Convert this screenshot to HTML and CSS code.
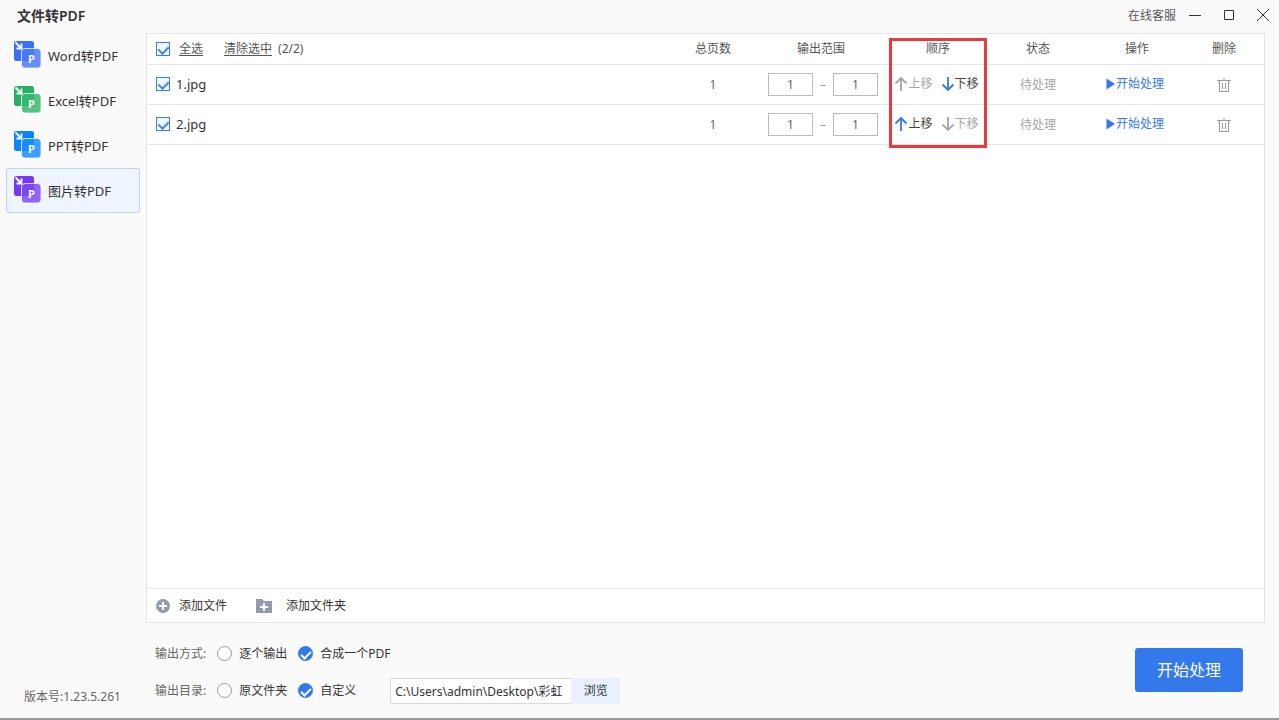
FILE: index.html
```
<!DOCTYPE html>
<html lang="zh-CN">
<head>
  <meta charset="UTF-8" />
  <meta name="viewport" content="width=device-width, initial-scale=1.0"/>
  <title>文件转PDF</title>
  <link rel="stylesheet" href="styles.css">
</head>
<body>
  <!-- shared icons -->
  <svg class="sprite" aria-hidden="true">
    <symbol id="convert" viewBox="0 0 28 28">
      <rect x="0" y="0" width="20" height="20" rx="2.5" fill="currentColor"/>
      <path d="M1.500 1.500l5.500 5.500M7.500 2.500v5h-5" fill="none" stroke="#fff" stroke-width="1.800"/>
      <rect x="7.500" y="7.500" width="19.500" height="19.500" rx="3.500" fill="currentColor"/>
      <rect x="7.500" y="7.500" width="19.500" height="19.500" rx="3.500" fill="#fff" fill-opacity=".22"/>
      <path d="M8 20V11a3 3 0 0 1 3-3h9v12z" fill="currentColor" fill-opacity=".7"/>
      <rect x="7.500" y="7.500" width="19.500" height="19.500" rx="3.500" fill="none" stroke="#fff" stroke-opacity=".75"/>
      <text class="icon-letter" x="17.500" y="22" text-anchor="middle">P</text>
    </symbol>
    <symbol id="up" viewBox="0 0 14 16">
      <path d="M7 15V2M1.500 7.500L7 2l5.500 5.500" fill="none" stroke="currentColor" stroke-width="1.800"/>
    </symbol>
    <symbol id="down" viewBox="0 0 14 16">
      <path d="M7 1v13M1.500 8.500L7 14l5.500-5.500" fill="none" stroke="currentColor" stroke-width="1.800"/>
    </symbol>
    <symbol id="play" viewBox="0 0 9 12">
      <path d="M0.500 0.500L9 6l-8.500 5.500z" fill="currentColor"/>
    </symbol>
    <symbol id="trash" viewBox="0 0 14 16">
      <path d="M0 3.500h14M7 1v2M2.500 3.500v11h9v-11M5.500 6v6M8.500 6v6" fill="none" stroke="currentColor"/>
    </symbol>
  </svg>

  <div class="window">
    <header class="titlebar">
      <h1>文件转PDF</h1>
      <div class="window-controls">
        <a href="#" class="support">在线客服</a>
        <button type="button" aria-label="最小化"><svg width="14" height="14" viewBox="0 0 14 14"><path d="M1 6.500h12"/></svg></button>
        <button type="button" aria-label="最大化"><svg width="14" height="14" viewBox="0 0 14 14"><path d="M2.500 1.500h9v9h-9z"/></svg></button>
        <button type="button" aria-label="关闭"><svg width="14" height="14" viewBox="0 0 14 14"><path d="M1 0l12 12M13 0L1 12"/></svg></button>
      </div>
    </header>

    <aside class="sidebar">
      <nav>
        <a href="#" class="nav-item"><svg class="word"><use href="#convert"/></svg>Word转PDF</a>
        <a href="#" class="nav-item"><svg class="excel"><use href="#convert"/></svg>Excel转PDF</a>
        <a href="#" class="nav-item"><svg class="ppt"><use href="#convert"/></svg>PPT转PDF</a>
        <a href="#" class="nav-item active"><svg class="image"><use href="#convert"/></svg>图片转PDF</a>
      </nav>
      <p class="version">版本号:1.23.5.261</p>
    </aside>

    <main>
      <section class="panel">
        <table class="files">
          <thead>
            <tr>
              <th class="col-name">
                <div class="name-cell">
                  <input type="checkbox" id="all" checked>
                  <label for="all" class="select-all">全选</label>
                  <a href="#" class="clear">清除选中</a>
                  <span>(2/2)</span>
                </div>
              </th>
              <th class="col-pages">总页数</th>
              <th class="col-range">输出范围</th>
              <th class="col-order">顺序<span class="frame"></span></th>
              <th class="col-status">状态</th>
              <th class="col-action">操作</th>
              <th class="col-delete">删除</th>
            </tr>
          </thead>
          <tbody>
            <tr>
              <td><div class="name-cell"><input type="checkbox" id="file1" checked><label for="file1">1.jpg</label></div></td>
              <td>1</td>
              <td><div class="range"><input type="text" value="1" aria-label="起始页"><span>–</span><input type="text" value="1" aria-label="结束页"></div></td>
              <td>
                <div class="order">
                  <button type="button" disabled><svg><use href="#up"/></svg>上移</button>
                  <button type="button"><svg><use href="#down"/></svg>下移</button>
                </div>
              </td>
              <td class="status">待处理</td>
              <td class="action"><button type="button" class="run"><svg><use href="#play"/></svg>开始处理</button></td>
              <td class="col-delete"><button type="button" class="delete" aria-label="删除"><svg><use href="#trash"/></svg></button></td>
            </tr>
            <tr>
              <td><div class="name-cell"><input type="checkbox" id="file2" checked><label for="file2">2.jpg</label></div></td>
              <td>1</td>
              <td><div class="range"><input type="text" value="1" aria-label="起始页"><span>–</span><input type="text" value="1" aria-label="结束页"></div></td>
              <td>
                <div class="order">
                  <button type="button"><svg><use href="#up"/></svg>上移</button>
                  <button type="button" disabled><svg><use href="#down"/></svg>下移</button>
                </div>
              </td>
              <td class="status">待处理</td>
              <td class="action"><button type="button" class="run"><svg><use href="#play"/></svg>开始处理</button></td>
              <td class="col-delete"><button type="button" class="delete" aria-label="删除"><svg><use href="#trash"/></svg></button></td>
            </tr>
          </tbody>
        </table>

        <div class="toolbar">
          <button type="button">
            <svg width="16" height="16" viewBox="0 0 16 16"><circle cx="8" cy="8" r="7" fill="#949bb0"/><path d="M8 4v8M4 8h8" stroke="#fff" stroke-width="2"/></svg>
            添加文件
          </button>
          <button type="button">
            <svg width="16" height="16" viewBox="0 0 16 16"><path d="M0 1h6l2 2h8v12H0z" fill="#949bb0"/><path d="M8 5v8M4 9h8" stroke="#fff" stroke-width="2"/></svg>
            添加文件夹
          </button>
        </div>
      </section>

      <form class="output">
        <div class="options">
          <div class="option-row">
            <span class="caption">输出方式:</span>
            <label class="choice"><input type="radio" name="mode">逐个输出</label>
            <label class="choice"><input type="radio" name="mode" checked>合成一个PDF</label>
          </div>
          <div class="option-row">
            <span class="caption">输出目录:</span>
            <label class="choice"><input type="radio" name="dir">原文件夹</label>
            <label class="choice"><input type="radio" name="dir" checked>自定义</label>
            <div class="path">
              <input type="text" value="C:\Users\admin\Desktop\彩虹" aria-label="输出目录">
              <button type="button">浏览</button>
            </div>
          </div>
        </div>
        <button type="button" class="start">开始处理</button>
      </form>
    </main>
  </div>
</body>
</html>
```

FILE: styles.css
```
* {
  box-sizing: border-box;
}

body {
  margin: 0;
  font-family: "Noto Sans", "Noto Sans CJK SC", sans-serif;
  font-size: 12px;
  line-height: 18px;
  color: #333;
  background: #fafafa;
}

button, input {
  font: inherit;
  color: inherit;
  margin: 0;
}

button {
  display: inline-flex;
  align-items: center;
  justify-content: center;
  padding: 0;
  border: none;
  background: none;
  cursor: pointer;
}

a {
  color: inherit;
  text-decoration: none;
}

.sprite {
  display: none;
}

.window {
  display: grid;
  grid-template-columns: 146px 1fr;
  grid-template-rows: 33px 1fr;
  height: 100vh;
  border-bottom: 2px solid #999;
}

/* Title bar */
.titlebar {
  grid-column: 1 / -1;
  display: flex;
  align-items: center;
  justify-content: space-between;
  padding: 0 9px 2px 17px;
}

.titlebar h1 {
  margin: 0;
  font-size: 14px;
  font-weight: 600;
}

.window-controls {
  display: flex;
  align-items: center;
  gap: 20px;
}

.window-controls svg {
  fill: none;
  stroke: #333;
}

.support {
  color: #555;
  margin-right: -8px;
}

/* Sidebar */
.sidebar {
  display: flex;
  flex-direction: column;
  justify-content: space-between;
  padding: 0 6px 12px;
}

.nav-item {
  display: flex;
  align-items: center;
  gap: 6px;
  height: 45px;
  padding: 0 7px;
  border: 1px solid transparent;
  font-size: 13px;
}

.nav-item.active {
  background: #eef5ff;
  border-color: #bdd3f5;
  border-radius: 2px;
}

.nav-item svg {
  width: 28px;
  height: 28px;
  margin-bottom: 2px;
}

.icon-letter {
  font-size: 11px;
  font-weight: 700;
  fill: #fff;
}

.word { color: #3a6ff8; }
.excel { color: #27b062; }
.ppt { color: #0a84ff; }
.image { color: #7439f0; }

.version {
  margin: 0;
  padding-left: 18px;
  color: #666;
}

/* File list */
main {
  display: flex;
  flex-direction: column;
  padding-right: 14px;
}

.panel {
  flex: 1;
  display: flex;
  flex-direction: column;
  justify-content: space-between;
  background: #fff;
  border: 1px solid #e6e6e6;
}

.files {
  width: 100%;
  table-layout: fixed;
  border-collapse: separate;
  border-spacing: 0;
}

.files th, .files td {
  padding: 0;
  text-align: center;
  border-bottom: 1px solid #e6e6e6;
}

.files th {
  height: 31px;
  font-weight: 400;
  color: #555;
}

.files td {
  height: 40px;
  color: #666;
}

.col-pages { width: 100px; }
.col-range { width: 120px; }
.col-order { width: 110px; position: relative; }
.col-status { width: 90px; }
.col-action { width: 108px; }
.col-delete { width: 73px; }

.files .col-delete {
  padding-right: 7px;
}

.files .col-range, .files .action {
  padding-right: 4px;
}

.frame {
  position: absolute;
  top: 4px;
  left: 6px;
  right: 6px;
  height: 110px;
  border: 3px solid #e9383f;
  pointer-events: none;
}

.name-cell {
  display: flex;
  align-items: center;
  gap: 6px;
  padding: 0 0 1px 9px;
}

td .name-cell {
  font-size: 13px;
  color: #333;
}

.select-all, .clear {
  text-decoration: underline;
  text-underline-offset: 2px;
}

.select-all {
  margin: 0 15px 0 3px;
}

input[type="checkbox"], input[type="radio"] {
  appearance: none;
  display: inline-flex;
  flex: none;
  justify-content: center;
}

input[type="checkbox"] {
  width: 14px;
  height: 14px;
  border: 1px solid #3c7be0;
  background: #eef8ff;
}

input[type="checkbox"]:checked::after, input[type="radio"]:checked::after {
  content: "";
  margin-top: 1px;
  width: 5px;
  height: 8px;
  border: solid #4a86e8;
  border-width: 0 2px 2px 0;
  transform: rotate(45deg);
}

.range {
  display: flex;
  align-items: center;
  justify-content: center;
  gap: 7px;
}

.range span {
  color: #999;
}

.range input {
  width: 45px;
  height: 23px;
  padding: 0;
  text-align: center;
  border: 1px solid #bbb;
  background: #fff;
}

.order {
  display: flex;
  justify-content: center;
  gap: 8px;
  padding: 0 3px 1px 0;
}

.order button {
  color: #444;
}

.order svg {
  width: 14px;
  height: 16px;
  margin-bottom: 1px;
  color: #3379eb;
}

.order button:disabled, .order button:disabled svg {
  color: #a6a6a6;
}

.files .status {
  color: #a6a6a6;
}

.run {
  gap: 1px;
  color: #3379eb;
}

.run svg {
  width: 9px;
  height: 12px;
}

.delete {
  vertical-align: middle;
}

.delete svg {
  width: 14px;
  height: 16px;
  color: #999;
}

.toolbar {
  display: flex;
  gap: 29px;
  height: 34px;
  padding-left: 8px;
  border-top: 1px solid #e6e6e6;
}

.toolbar button {
  gap: 8px;
}

.toolbar button + button {
  gap: 14px;
}

/* Output settings */
.output {
  display: flex;
  justify-content: space-between;
  align-items: flex-start;
  padding: 17px 22px 14px 9px;
}

.options {
  display: flex;
  flex-direction: column;
  gap: 10px;
}

.option-row {
  display: flex;
  align-items: center;
  gap: 11px;
  height: 27px;
}

.caption {
  color: #666;
}

.choice {
  display: flex;
  align-items: center;
  gap: 7px;
}

input[type="radio"] {
  width: 15px;
  height: 15px;
  border: 1px solid #999;
  border-radius: 50%;
  background: #fff;
}

input[type="radio"]:checked {
  border-color: #3379eb;
  background: #3379eb;
}

input[type="radio"]:checked::after {
  margin-top: 2px;
  width: 4px;
  height: 8px;
  border-color: #fff;
  border-width: 0 2px 2px 0;
}

.path {
  display: flex;
  margin-left: 23px;
}

.path input {
  width: 181px;
  height: 26px;
  padding: 0 0 0 4px;
  border: 1px solid #d9d9d9;
  border-right: none;
  background: #fff;
}

.path button {
  width: 49px;
  background: #e9f0ff;
}

.start {
  width: 108px;
  height: 44px;
  margin-top: 8px;
  border-radius: 3px;
  background: #3379eb;
  color: #fff;
  font-size: 16px;
}
```
